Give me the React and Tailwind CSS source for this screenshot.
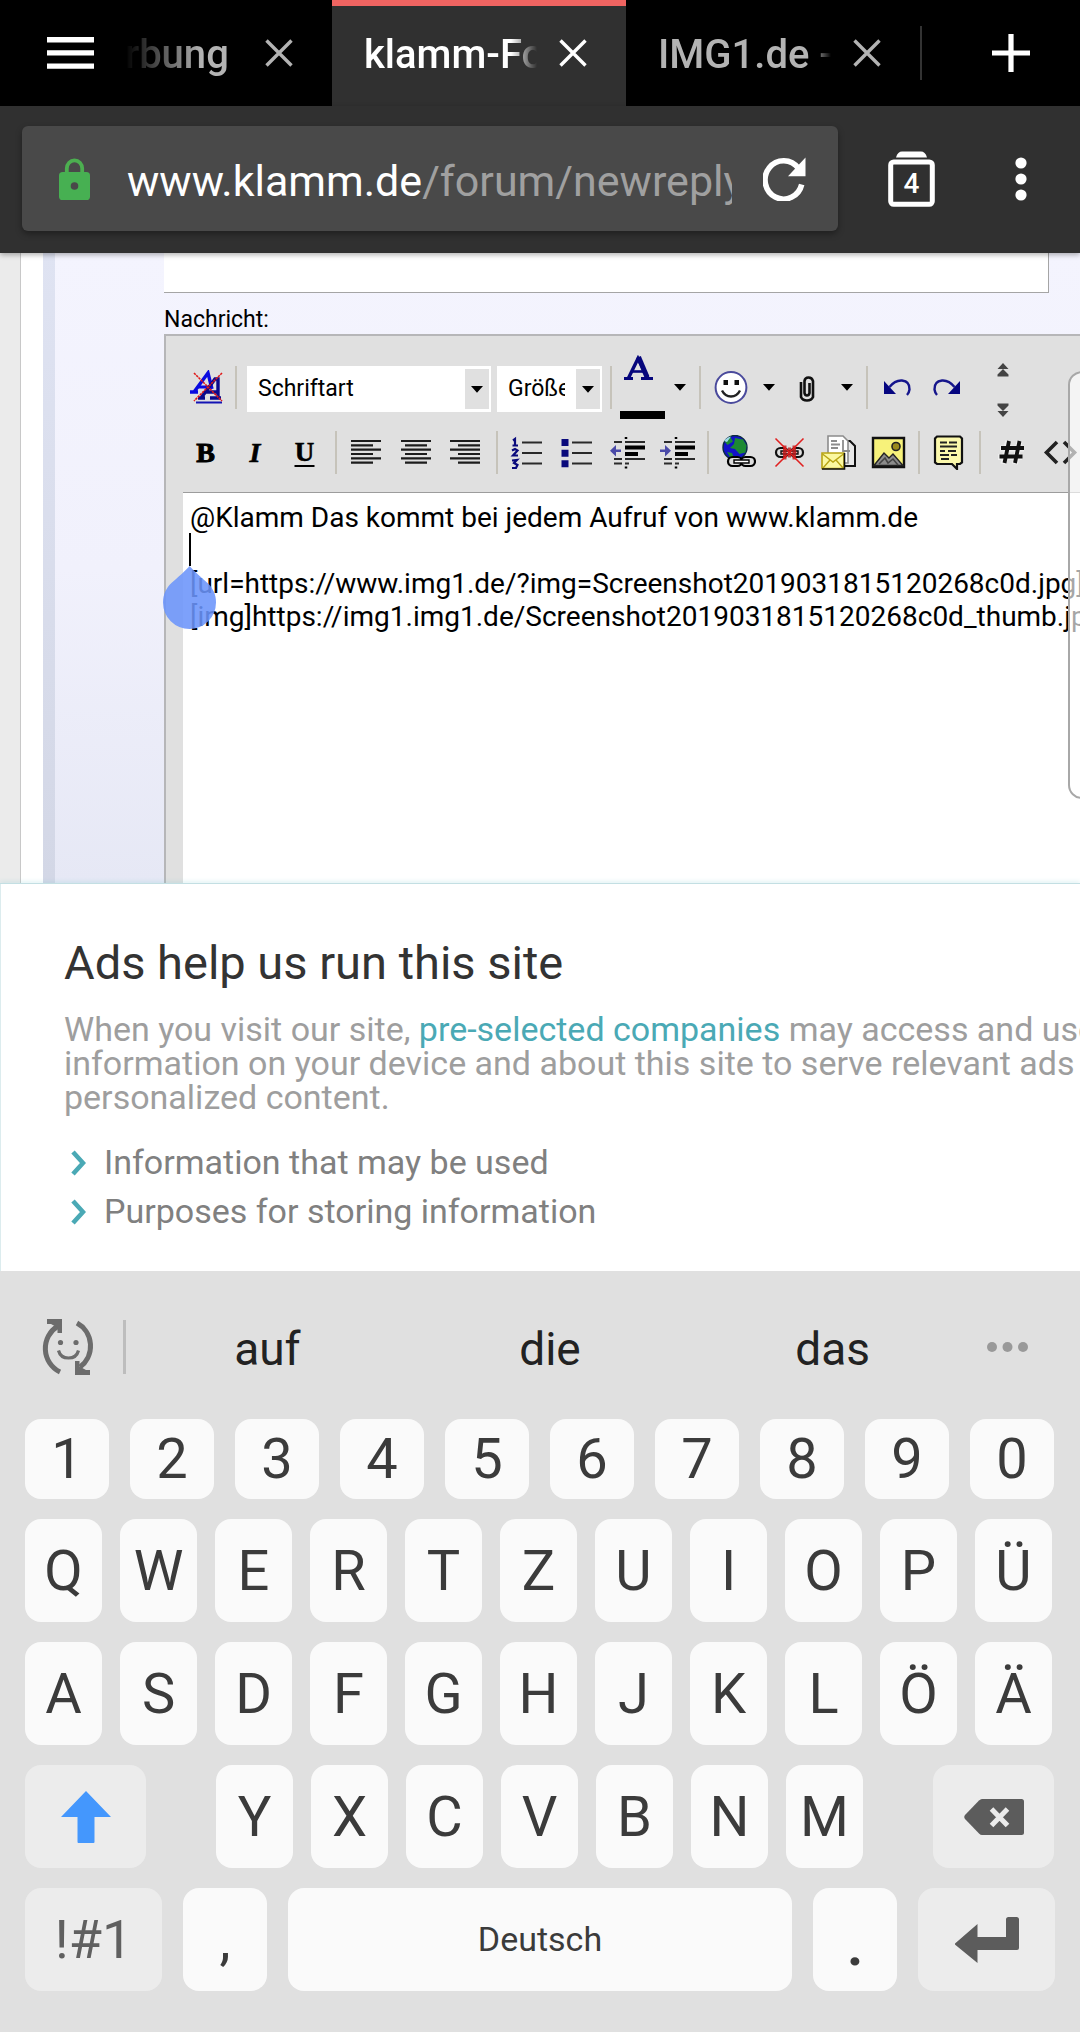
import React, { useState } from 'react';

const NUMBER_KEYS = ['1', '2', '3', '4', '5', '6', '7', '8', '9', '0'];
const TOP_KEYS = ['Q', 'W', 'E', 'R', 'T', 'Z', 'U', 'I', 'O', 'P', 'Ü'];
const HOME_KEYS = ['A', 'S', 'D', 'F', 'G', 'H', 'J', 'K', 'L', 'Ö', 'Ä'];
const BOTTOM_KEYS = ['Y', 'X', 'C', 'V', 'B', 'N', 'M'];
const SUGGESTIONS = ['auf', 'die', 'das'];

const INITIAL_MESSAGE = `@Klamm Das kommt bei jedem Aufruf von www.klamm.de

[url=https://www.img1.de/?img=Screenshot2019031815120268c0d.jpg]
[img]https://img1.img1.de/Screenshot2019031815120268c0d_thumb.jpg[/img]`;

/* ---------- Browser chrome ---------- */

function CloseIcon() {
  return (
    <svg width="28" height="28" viewBox="0 0 28 28" fill="none" stroke="currentColor" strokeWidth="3.4">
      <path d="M1.5 1.5 26.5 26.5M26.5 1.5 1.5 26.5" />
    </svg>
  );
}

function Tab({ title, active, className, titleClassName }) {
  return (
    <div
      className={`flex items-center gap-[22px] pr-[39px] shrink-0 ${
        active ? 'bg-[#303030] text-white border-t-6 border-[#ef6461] pb-[6px]' : 'text-[#b3b3b3]'
      } ${className}`}
    >
      <span
        className={`flex-1 min-w-0 overflow-hidden whitespace-nowrap pt-1 text-[40px] leading-[48px] font-medium ${titleClassName}`}
      >
        {title}
      </span>
      <button aria-label="Tab schließen" className="shrink-0">
        <CloseIcon />
      </button>
    </div>
  );
}

function TabStrip() {
  return (
    <div className="flex h-[106px] bg-black shrink-0">
      <button aria-label="Tabs" className="w-[125px] shrink-0 pl-[47px] text-white">
        <svg width="47" height="32" viewBox="0 0 47 32" fill="currentColor">
          <path d="M0 0h47v5.4H0zM0 13.2h47v5.4H0zM0 26.4h47v5.4H0z" />
        </svg>
      </button>
      <Tab
        title="rbung"
        className="w-[207px]"
        titleClassName="[mask-image:linear-gradient(to_right,transparent,black_65%)]"
      />
      <Tab
        title="klamm-Forum"
        active
        className="w-[294px] pl-8"
        titleClassName="[mask-image:linear-gradient(to_right,black_85%,transparent)]"
      />
      <Tab
        title="IMG1.de - "
        className="w-[294px] pl-8"
        titleClassName="[mask-image:linear-gradient(to_right,black_90%,transparent)]"
      />
      <div className="w-[2px] h-[54px] self-center bg-[#333333]" />
      <button aria-label="Neuer Tab" className="flex-1 flex items-center justify-center pl-5 text-white">
        <svg width="38" height="38" viewBox="0 0 38 38" fill="currentColor">
          <path d="M16.4 0h5.2v16.4H38v5.2H21.6V38h-5.2V21.6H0v-5.2h16.4z" />
        </svg>
      </button>
    </div>
  );
}

function AddressBar() {
  return (
    <div className="relative z-10 flex items-center bg-[#303030] pl-[22px] pt-5 pb-[22px] shrink-0 text-white shadow-[0_2px_5px_rgba(0,0,0,0.3)]">
      <div className="flex-1 min-w-0 h-[105px] flex items-center rounded-md bg-[#494949] pl-[37px] pr-8 shadow-[0_3px_6px_rgba(0,0,0,0.35)]">
        <svg width="31" height="42" viewBox="0 0 31 42" className="shrink-0">
          <path d="M7.8 15V10.5a7.7 8.2 0 0 1 15.4 0V15" fill="none" stroke="#4caf50" strokeWidth="3.8" />
          <rect x="0" y="14" width="31" height="28" rx="3.6" fill="#47b052" />
          <circle cx="15.5" cy="28" r="3.8" fill="#494949" />
        </svg>
        <div className="flex-1 min-w-0 ml-[37px] pt-1 overflow-hidden whitespace-nowrap text-[43px] leading-[56px]">
          www.klamm.de<span className="text-[#a0a0a0]">/forum/newreply.php</span>
        </div>
        <button aria-label="Neu laden" className="ml-[31px] shrink-0">
          <svg width="43" height="44" viewBox="0 0 43 44">
            <path d="M35.4 11.2A18.6 19.2 0 1 0 38.7 27.5" fill="none" stroke="currentColor" strokeWidth="5.6" />
            <path d="M42.5 0.5V19.2H25z" fill="currentColor" />
          </svg>
        </button>
      </div>
      <button aria-label="4 offene Tabs" className="ml-[50px] shrink-0">
        <svg width="47" height="56" viewBox="0 0 47 56">
          <path d="M8 6.4C9 2.6 11.5.6 14 .6h19c2.5 0 5 2 6 5.8z" fill="currentColor" />
          <rect x="2.7" y="11" width="41.6" height="42.3" rx="3" fill="none" stroke="currentColor" strokeWidth="5" />
          <text x="23.5" y="41.5" textAnchor="middle" fill="currentColor" className="text-[28px] font-medium">4</text>
        </svg>
      </button>
      <button aria-label="Menü" className="ml-20 mr-[53px] shrink-0">
        <svg width="12" height="44" viewBox="0 0 12 44" fill="currentColor">
          <circle cx="6" cy="6" r="5.6" />
          <circle cx="6" cy="22" r="5.6" />
          <circle cx="6" cy="38" r="5.6" />
        </svg>
      </button>
    </div>
  );
}

/* ---------- Editor toolbar ---------- */

function Separator() {
  return (
    <div className="w-[11px] shrink-0 flex justify-center">
      <div className="w-[2px] h-[43px] bg-[#c6c3ba]" />
    </div>
  );
}

function Tool({ label, children }) {
  return (
    <button title={label} aria-label={label} className="w-[50px] h-[50px] shrink-0 flex items-center justify-center">
      <svg width="35" height="35" viewBox="0 0 35 35">{children}</svg>
    </button>
  );
}

function Caret() {
  return (
    <svg width="12" height="7" viewBox="0 0 12 7" className="fill-black">
      <path d="M0 0h12L6 6.8z" />
    </svg>
  );
}

function DropArrow({ label }) {
  return (
    <button aria-label={label} className="w-7 h-[43px] shrink-0 flex items-center justify-center">
      <Caret />
    </button>
  );
}

function Dropdown({ label, className, options }) {
  return (
    <label className={`relative h-[46px] mt-1 shrink-0 bg-white ${className}`}>
      <select
        aria-label={label}
        className="appearance-none w-full h-full pl-[11px] pr-[37px] bg-transparent text-[23px] leading-[46px] text-black"
      >
        {options.map((o) => (
          <option key={o}>{o}</option>
        ))}
      </select>
      <span className="pointer-events-none absolute right-[2px] inset-y-[3px] w-6 bg-[#e0e0e0] flex items-center justify-center">
        <Caret />
      </span>
    </label>
  );
}

function FontRow() {
  return (
    <div className="flex items-center h-16 pl-[14px] pb-1">
      <Tool label="Formatierung entfernen">
        <path d="M2 22h8M6 22 20 3l4 16" fill="none" stroke="#0a0ae0" strokeWidth="3.4" />
        <path d="M9 17h13" stroke="#0a0ae0" strokeWidth="3" />
        <path d="M10 28h7M22 28h11M13 28 27 9h3v19M18 22h11" fill="none" stroke="#0a0a8c" strokeWidth="3.4" />
        <path d="M8 32.5h26" stroke="#1414b4" strokeWidth="2" />
        <path d="M6 3 34 31M34 3 6 31" stroke="#e01818" strokeWidth="1.6" strokeDasharray="2.4 .8" />
      </Tool>
      <Separator />
      <Dropdown label="Schriftart" className="ml-[6px] w-[244px]" options={['Schriftart', 'Arial', 'Verdana']} />
      <Dropdown label="Größe" className="ml-[6px] mr-[3px] w-[105px]" options={['Größe', '1', '2', '3']} />
      <Separator />
      <button aria-label="Schriftfarbe" className="w-[50px] h-16 pl-1 shrink-0 flex flex-col items-start justify-between">
        <svg width="45" height="25" viewBox="-4 0 45 25">
          <path d="M0 23.5h9M17 23.5h12" stroke="#06067c" strokeWidth="3" />
          <path d="M4.5 23 14 3.5 24 23" fill="none" stroke="#06067c" strokeWidth="3.4" />
          <path d="M14.5 2 23 22" stroke="#06067c" strokeWidth="5" />
          <path d="M8 16.5h12" stroke="#06067c" strokeWidth="2.6" />
        </svg>
        <span className="w-[45px] h-2 bg-black" />
      </button>
      <DropArrow label="Farbe wählen" />
      <Separator />
      <Tool label="Smileys">
        <circle cx="18" cy="17.5" r="15.4" fill="#fff" stroke="#4a4a9c" strokeWidth="2" />
        <path d="M10.5 10H15v5h-4.500zM21.5 10H26v5h-4.500z" fill="#111" />
        <path d="M9 20.5q3 6 9 6t9-6" fill="none" stroke="#222" strokeWidth="2.4" />
      </Tool>
      <DropArrow label="Smiley wählen" />
      <Tool label="Anhang">
        <path d="M10 12v15q1.5 3.5 6 3.5t6-3.500V11q-1-3.500-4.500-3.500T13.500 11v12q.5 2.500 2.500 2.500t2.500-2.500V13" fill="none" stroke="#111" strokeWidth="2.6" />
      </Tool>
      <DropArrow label="Anhang wählen" />
      <Separator />
      <Tool label="Rückgängig">
        <path d="M4 11v13h12z" fill="#060680" />
        <path d="M9.5 17Q15 10 22 10.5q8 1 7.500 9-.5 3.500-2.500 5.500" fill="none" stroke="#16168c" strokeWidth="2.4" />
      </Tool>
      <Tool label="Wiederholen">
        <path d="M30 11v13H18z" fill="#060680" />
        <path d="M24.5 17Q19 10 12 10.500q-8 1-7.500 9Q5 23 7 25" fill="none" stroke="#16168c" strokeWidth="2.4" />
      </Tool>
      <div className="w-[62px] h-[58px] mt-[6px] shrink-0 flex flex-col items-center justify-between py-0.5">
        <button aria-label="Editor verkleinern">
          <svg width="12" height="14" viewBox="0 0 12 14" fill="#444" className="block">
            <path d="M6 0l5.500 6H.5zM6 6l5.500 5.500H.5zM.5 11.500h11v2H.5z" />
          </svg>
        </button>
        <button aria-label="Editor vergrößern">
          <svg width="12" height="14" viewBox="0 0 12 14" fill="#444" className="block">
            <path d="M.5.500h11v2H.5zM6 8 .5 2.500h11zM6 14 .5 8h11z" />
          </svg>
        </button>
      </div>
    </div>
  );
}

function FormatRow() {
  return (
    <div className="flex items-center h-[63px] pl-[14px]">
      <Tool label="Fett">
        <text x="17.5" y="27" textAnchor="middle" className="font-['Liberation_Serif'] text-[28px] font-bold" stroke="#000" strokeWidth="1">B</text>
      </Tool>
      <Tool label="Kursiv">
        <text x="17" y="27" textAnchor="middle" className="font-['Liberation_Serif'] text-[28px] font-bold italic" stroke="#000" strokeWidth=".6">I</text>
      </Tool>
      <Tool label="Unterstrichen">
        <text x="16.5" y="26" textAnchor="middle" className="font-['Liberation_Serif'] text-[27px] font-bold" stroke="#000" strokeWidth=".6">U</text>
        <path d="M6.5 31h20" stroke="#000" strokeWidth="2" />
      </Tool>
      <Separator />
      <Tool label="Linksbündig">
        <path d="M2 6h30M2 10.4h22M2 14.7h30M2 19h22M2 23.3h30M2 27.6h22" stroke="#1c1c1c" strokeWidth="2.2" />
      </Tool>
      <Tool label="Zentriert">
        <path d="M2 6h30M6 10.4h22M2 14.7h30M6 19h22M2 23.3h30M6 27.6h22" stroke="#1c1c1c" strokeWidth="2.2" />
      </Tool>
      <Tool label="Rechtsbündig">
        <path d="M1 6h30M9 10.4h22M1 14.7h30M9 19h22M1 23.3h30M9 27.6h22" stroke="#1c1c1c" strokeWidth="2.2" />
      </Tool>
      <Separator />
      <Tool label="Nummerierte Liste">
        <path d="M12 7.5h20M12 18h20M12 28.5h20" stroke="#2a2a2a" strokeWidth="2.2" />
        <path d="M3 5.5 5 4v6M2.500 10.500h5.500M2 15.500l3-1.500 2.500 1.500-4.500 5h5M2 25.500l5-.5-3 3 3.500 2-1.500 3H2" fill="none" stroke="#0a0a7c" strokeWidth="2.2" />
      </Tool>
      <Tool label="Liste">
        <path d="M12 7.5h20M12 18h20M12 28.5h20" stroke="#2a2a2a" strokeWidth="2.2" />
        <path d="M1.5 4h7v7h-7zM1.5 14.700h7v7h-7zM1.5 25.300h7v7h-7z" fill="#0a0a7c" />
      </Tool>
      <Tool label="Einzug verkleinern">
        <path d="M4 7h8M4 24h8M4 28.5h8M15 7h20M15 24h20M15 28.5h4" stroke="#2a2a2a" strokeWidth="2" />
        <path d="M15 10.5h20v4H15zM15 17h13v4H15z" fill="#000" />
        <path d="M16 2v2M16 31.5v2" stroke="#000" strokeWidth="2.5" />
        <path d="M0 15.8 6 10v4.500h5v2.600H6v4.500z" fill="#4b4ba8" />
      </Tool>
      <Tool label="Einzug vergrößern">
        <path d="M4 7h8M4 24h8M4 28.5h8M15 7h20M15 24h20M15 28.5h4" stroke="#2a2a2a" strokeWidth="2" />
        <path d="M15 10.5h20v4H15zM15 17h13v4H15z" fill="#000" />
        <path d="M16 2v2M16 31.5v2" stroke="#000" strokeWidth="2.5" />
        <path d="M11 15.8 5 10v4.500H0v2.600h5v4.500z" fill="#4b4ba8" />
      </Tool>
      <Separator />
      <Tool label="Link einfügen">
        <circle cx="14" cy="12.5" r="12" fill="#1212c8" stroke="#0b2b40" strokeWidth="1.4" />
        <path d="M9 1.5 4 7l2.500 3L12 6.500zM14 3l8 1.500 3.500 6-1 7-6 1.500-4.500-5-5-1 4-4zM6 17l5 1 2 5-4-1z" fill="#1c8a32" />
        <path d="M3 6q3-4 7-4.500L6 7z" fill="#9fd8e8" />
        <rect x="7" y="22" width="14" height="9" rx="4.5" fill="#ddd" stroke="#000" strokeWidth="2.2" />
        <rect x="20" y="22" width="14" height="9" rx="4.5" fill="#ddd" stroke="#000" strokeWidth="2.2" />
        <path d="M13 25h15v3H13z" fill="#fff" stroke="#000" strokeWidth="1.4" />
      </Tool>
      <Tool label="Link entfernen">
        <rect x="5" y="13" width="12" height="9" rx="4.5" fill="none" stroke="#111" strokeWidth="2.2" />
        <rect x="20" y="13" width="12" height="9" rx="4.5" fill="none" stroke="#111" strokeWidth="2.2" />
        <path d="M10 16h17v3H10z" fill="#e8a0a0" stroke="#111" strokeWidth="1.4" />
        <path d="M12 10.5h3.500v14H12zM21.500 10.500H25v14h-3.500zM17 12.500h3v10h-3z" fill="#c01818" opacity=".8" />
        <path d="M4.5 3.500 32.500 31.500M32.500 3.500 4.500 31.500" stroke="#e02020" strokeWidth="1.6" />
      </Tool>
      <Tool label="E-Mail-Link">
        <path d="M17 6h12l5 5v20H17z" fill="#e8e8e8" stroke="#111" strokeWidth="2" />
        <path d="M7 1h15l5 5v22H7z" fill="#fff" stroke="#8c8c8c" strokeWidth="1.6" />
        <path d="M10 6h6M10 9.5h9M10 13h7M22 5v11h7" stroke="#8c8c8c" strokeWidth="1.8" fill="none" />
        <path d="M1 18h22v15.500H1z" fill="#fbf8a0" stroke="#b8a414" strokeWidth="1.6" />
        <path d="M1.5 19 12 27l10.500-8M2 33l7-8M22 33l-7-8" fill="none" stroke="#b8a414" strokeWidth="1.4" />
        <path d="M1 34h22.500V18" fill="none" stroke="#111" strokeWidth="1.6" />
      </Tool>
      <Tool label="Grafik einfügen">
        <path d="M2 3h31v29H2z" fill="#f7f27a" stroke="#111" strokeWidth="2.4" />
        <circle cx="25" cy="11.5" r="4" fill="#9a8a1c" stroke="#222" strokeWidth="1.6" />
        <path d="M3 30.5 13 18l5 5 4-4 10 11.500z" fill="#8c8c8c" stroke="#222" strokeWidth="1.4" />
        <path d="M8 29l6-6 3 5 5-4 5 6" fill="none" stroke="#444" strokeWidth="1.6" />
      </Tool>
      <Separator />
      <Tool label="Zitat">
        <path d="M5 1.5h23l2 2v24l-2 1.500h-3v5l-5-5H5l-2-1.500v-24z" fill="#fbf8ac" stroke="#111" strokeWidth="2.2" />
        <path d="M8 7.5h7M17 7.500h8M8 11.500h17M8 16h5M16 16h8M8 20h9M19 20h6M9 24h8" stroke="#222" strokeWidth="2" />
      </Tool>
      <Separator />
      <Tool label="Code">
        <path d="M15 6 10.5 29M26.500 6 22 29M7 13.500h24M5 22h24" stroke="#fff" strokeWidth="6" opacity=".5" />
        <path d="M16 6 11.5 28M26.500 6 22 28M8 13h23M6.500 21.500h23" stroke="#111" strokeWidth="3.8" />
      </Tool>
      <Tool label="HTML">
        <path d="M14 7 3.5 17.500 14 28M21 7l10.500 10.500L21 28" fill="none" stroke="#222" strokeWidth="3.6" />
      </Tool>
    </div>
  );
}

function ForumPage() {
  const [message, setMessage] = useState(INITIAL_MESSAGE);

  return (
    <div className="relative flex-1 min-h-0 flex overflow-hidden bg-white">
      <div className="w-[21px] shrink-0 bg-[#ebebeb] border-r border-[#c8c8c8]" />
      <div className="w-[22px] shrink-0" />
      <div className="w-3 shrink-0 bg-linear-to-b from-[#dfe3f2] to-[#d3d7e6]" />
      <div className="flex-1 min-w-0 flex flex-col pl-[109px] bg-linear-to-b from-[#f4f4fe] via-[#f1f1fc] to-[#e6e8f5]">
        <input
          type="text"
          aria-label="Titel"
          className="h-10 mr-[31px] shrink-0 bg-white border-b border-r border-[#a5a5a5] outline-none"
        />
        <label htmlFor="message" className="block h-[41px] pt-3 shrink-0 text-[23px] leading-[30px] text-black">
          Nachricht:
        </label>
        <div className="flex-1 min-h-0 flex flex-col bg-[#e0e0e0] border-t-2 border-l-2 border-[#b6b6b8]">
          <div className="pt-[21px] pb-2 shrink-0">
            <FontRow />
            <FormatRow />
          </div>
          <div className="relative flex-1 min-h-0 ml-[17px] border-t border-[#9c9c9c] bg-white">
            <textarea
              id="message"
              wrap="off"
              spellCheck={false}
              value={message}
              onChange={(e) => setMessage(e.target.value)}
              className="block w-full h-full pl-[7px] pt-2 resize-none overflow-hidden outline-none whitespace-pre text-[28px] leading-[33px] text-black"
            />
            {/* text cursor with its drag handle */}
            <div className="absolute left-[6px] top-10 w-[2px] h-[33px] bg-black" />
            <svg width="53" height="63" viewBox="0 0 53 63" className="absolute -left-5 top-[73px]">
              <path
                d="M26.5 0Q33 7 44 16.500C50 22 53 28.500 53 36.500a26.500 26.500 0 0 1-53 0C0 28.500 3 22 9 16.500 20 7 24 3 26.500 0z"
                fill="#6b94fb"
                opacity=".88"
              />
            </svg>
          </div>
        </div>
      </div>
      {/* edge panel handle */}
      <div className="absolute top-[118px] -right-4 w-7 h-[428px] rounded-[18px] border-2 border-[#a8a8a8] bg-white/65" />
    </div>
  );
}

function AdNotice() {
  return (
    <div className="relative shrink-0 overflow-hidden bg-white border-l border-[#dcecee] pl-[63px] pt-[51px] pb-[35px] whitespace-nowrap">
      <h2 className="text-[47px] leading-[56px] text-[#333333]">Ads help us run this site</h2>
      <p className="mt-[21px] text-[34px] leading-[34px] text-[#9e9e9e]">
        When you visit our site, <a href="#companies" className="text-[#4aa9b5]">pre-selected companies</a> may access and use
        <br />
        information on your device and about this site to serve relevant ads
        <br />
        personalized content.
      </p>
      <ul className="mt-6 text-[34px] leading-[49px] text-[#808080]">
        {['Information that may be used', 'Purposes for storing information'].map((text) => (
          <li key={text}>
            <button className="flex items-center">
              <svg width="16" height="28" viewBox="0 0 16 28" className="ml-[6px] mr-[18px]" fill="none" stroke="#4aa9b5" strokeWidth="4.6">
                <path d="M3 3 13 14 3 25" />
              </svg>
              {text}
            </button>
          </li>
        ))}
      </ul>
    </div>
  );
}

/* ---------- Keyboard ---------- */

function Key({ children, label, className = 'flex-1', tone = 'bg-[#fafafa] text-[#3b3b3b] text-[56px]' }) {
  return (
    <button
      aria-label={label}
      className={`h-full flex items-center justify-center rounded-2xl ${tone} ${className}`}
    >
      {children}
    </button>
  );
}

function Keyboard() {
  return (
    <div className="shrink-0 bg-[#e0e0e0] pt-1 pb-[41px]">
      <div className="flex items-center h-36 text-[46px] text-[#222222]">
        <button aria-label="Emoji" className="ml-[41px] shrink-0">
          <svg width="55" height="56" viewBox="0 0 55 56" fill="none" stroke="#6c6c6c">
            <path d="M19 53A25.5 26 0 0 1 17 7M36 4A25.500 26 0 0 1 39 48" strokeWidth="5" />
            <path d="M6 0h15v14h-4.500V8.500L10 5H6zM49 56H34V42h4.500v5.500L45 51h4z" fill="#6c6c6c" stroke="none" />
            <circle cx="19.5" cy="23.5" r="2.6" fill="#6c6c6c" stroke="none" />
            <circle cx="35" cy="23.5" r="2.6" fill="#6c6c6c" stroke="none" />
            <path d="M17.5 31.500Q19.500 39 27.500 39t10-7.500" strokeWidth="3.2" />
          </svg>
        </button>
        <div className="w-[3px] h-[54px] ml-[27px] shrink-0 bg-[#bdbdbd]" />
        <div className="flex-1 flex">
          {SUGGESTIONS.map((word) => (
            <button key={word} className="flex-1 pt-1">
              {word}
            </button>
          ))}
        </div>
        <button aria-label="Mehr" className="w-[106px] pl-[13px] shrink-0">
          <svg width="41" height="10" viewBox="0 0 41 10" fill="#999999">
            <circle cx="5" cy="5" r="5" />
            <circle cx="20.5" cy="5" r="5" />
            <circle cx="36" cy="5" r="5" />
          </svg>
        </button>
      </div>

      <div className="flex flex-col gap-5 pl-[25px]">
        <div className="flex gap-[21px] h-20 pr-[26px]">
          {NUMBER_KEYS.map((k) => (
            <Key key={k}>{k}</Key>
          ))}
        </div>
        <div className="flex gap-[18px] h-[103px] pr-7">
          {TOP_KEYS.map((k) => (
            <Key key={k}>{k}</Key>
          ))}
        </div>
        <div className="flex gap-[18px] h-[103px] pr-7">
          {HOME_KEYS.map((k) => (
            <Key key={k}>{k}</Key>
          ))}
        </div>
        <div className="flex h-[103px] pr-[26px]">
          <Key label="Umschalt" className="w-[121px]" tone="bg-[#ececec]">
            <svg width="50" height="52" viewBox="0 0 50 52" fill="#4497fd">
              <path d="M25 0 50 26H33.500v25q0 1-1 1h-15q-1 0-1-1V26H0z" />
            </svg>
          </Key>
          <div className="flex-1 flex gap-[18px] mx-[70px]">
            {BOTTOM_KEYS.map((k) => (
              <Key key={k}>{k}</Key>
            ))}
          </div>
          <Key label="Löschen" className="w-[121px]" tone="bg-[#ececec]">
            <svg width="60" height="36" viewBox="0 0 60 36">
              <path d="M18 0h39.500Q60 0 60 2.500v31Q60 36 57.500 36H18q-1.500 0-3-1.500L1 20q-1.500-2 0-4L15 1.500Q16.500 0 18 0z" fill="#5c5c5c" />
              <path d="M27.5 10 43.500 26.500M43.500 10 27.500 26.500" stroke="#ececec" strokeWidth="5" />
            </svg>
          </Key>
        </div>
        <div className="flex gap-[21px] h-[103px] pr-[25px]">
          <Key className="w-[137px]" tone="bg-[#ececec] text-[#606060] text-[54px]">!#1</Key>
          <Key className="w-[84px]">,</Key>
          <Key tone="bg-[#fafafa] text-[#3b3b3b] text-[34px]">Deutsch</Key>
          <Key className="w-[84px] pt-3 font-bold">.</Key>
          <Key label="Eingabe" className="w-[137px]" tone="bg-[#ececec]">
            <svg width="64" height="46" viewBox="0 0 64 46" fill="#5c5c5c">
              <path d="M0 26.5 22.500 7v13H51V2.500Q51 0 53.500 0h8Q64 0 64 2.500V31q0 2-2 2H22.500v13L.5 28Q-.5 27.200 0 26.500z" />
            </svg>
          </Key>
        </div>
      </div>
    </div>
  );
}

export default function App() {
  return (
    <div className="h-screen flex flex-col overflow-hidden bg-white font-[Roboto,sans-serif]">
      <TabStrip />
      <AddressBar />
      <ForumPage />
      <div className="relative h-px shrink-0 bg-[#c3dfe3] shadow-[0_0_5px_#7fc4cc]" />
      <AdNotice />
      <Keyboard />
    </div>
  );
}
